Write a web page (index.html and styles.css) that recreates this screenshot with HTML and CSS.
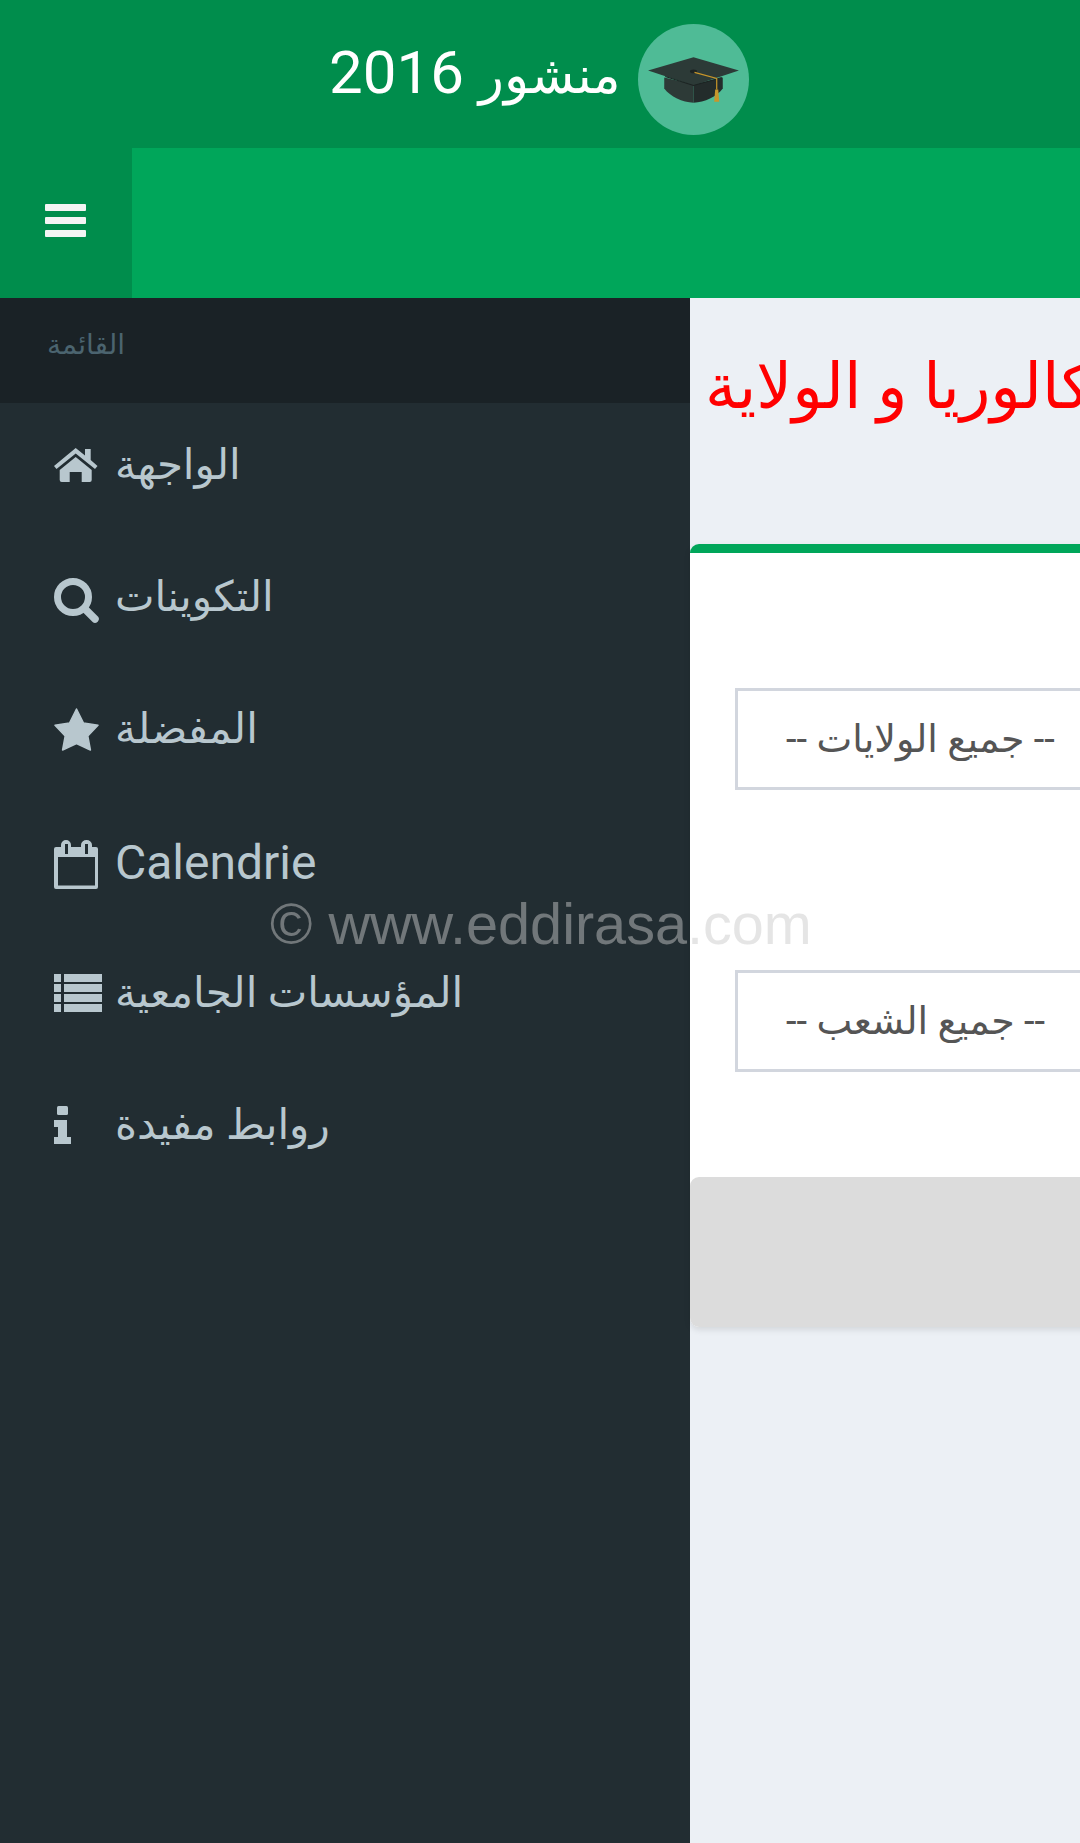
FILE: index.html
```html
<!DOCTYPE html>
<html lang="ar">
<head>
  <meta charset="UTF-8">
  <meta name="viewport" content="width=device-width, initial-scale=1.0">
  <title>منشور 2016</title>
  <link rel="stylesheet" href="styles.css">
</head>
<body>
  <header class="top-bar">
    <span class="site-title" dir="rtl"><span class="site-title-ar">منشور</span> 2016</span>
    <svg class="logo" viewBox="0 0 110 110" aria-hidden="true">
      <circle cx="55" cy="55" r="55" fill="#4fbb96"/>
      <path d="M26 53V64C32 72 44 78 55 78V60Z" fill="#2d3a37"/>
      <path d="M84 53L84 64C78 72 66 78 55 78V60Z" fill="#232c2b"/>
      <path d="M10 46L55 33L100 46L55 61Z" fill="#2c3a37"/>
      <path d="M27 52L55 61L83 53" fill="none" stroke="#1c2322" stroke-width="1"/>
      <ellipse cx="55" cy="47" rx="3.5" ry="1.8" fill="#1c2322"/>
      <path d="M56 48L78 54V65" fill="none" stroke="#c8962a" stroke-width="1.2"/>
      <path d="M76.5 65H79.5L80.5 77H75.5Z" fill="#c8962a"/>
    </svg>
  </header>

  <nav class="navbar">
    <div class="toggle">
      <span></span>
      <span></span>
      <span></span>
    </div>
  </nav>

  <div class="wrapper">
    <aside class="sidebar">
      <div class="sidebar-header"><span dir="rtl">القائمة</span></div>
      <ul class="menu">
        <li class="menu-item">
          <span class="icon-slot"><svg class="icon" width="44" height="35" viewBox="0 0 44 35"><path d="M21.7 0L31 7.5V1H36.7V12L43.5 18L41 21L21.7 5.5L2.5 21L0 18Z"/><path d="M21.7 9L37.7 22V32A2 2 0 0 1 35.7 34H27.7V24H15.7V34H7.7A2 2 0 0 1 5.7 32V22Z"/></svg></span>
          <span dir="rtl">الواجهة</span>
        </li>
        <li class="menu-item">
          <span class="icon-slot icon-low"><svg class="icon" width="45" height="45" viewBox="0 0 45 45"><circle cx="19" cy="19" r="15.5" fill="none" stroke="#b8c7ce" stroke-width="7"/><path d="M31 31L41 41" fill="none" stroke="#b8c7ce" stroke-width="7.5" stroke-linecap="round"/></svg></span>
          <span dir="rtl">التكوينات</span>
        </li>
        <li class="menu-item">
          <span class="icon-slot"><svg class="icon" width="45" height="43" viewBox="0 0 45 43"><path d="M22.5 1L29.5 15L44 17.3L33.8 28L36.4 42L22.5 35.5L8.6 42L11.2 28L1 17.3L15.5 15Z" stroke="#b8c7ce" stroke-width="1.5" stroke-linejoin="round"/></svg></span>
          <span dir="rtl">المفضلة</span>
        </li>
        <li class="menu-item">
          <span class="icon-slot icon-low"><svg class="icon" width="44" height="49" viewBox="0 0 44 49"><path fill-rule="evenodd" d="M2 7H7V5A5 5 0 0 1 17 5V7H27V5A5.500 5 0 0 1 38 5V7H42A2 2 0 0 1 44 9V47A2 2 0 0 1 42 49H2A2 2 0 0 1 0 47V9A2 2 0 0 1 2 7ZM4 17V45.500H41V17ZM11 4V14H14V4ZM31 4V14H34V4Z"/></svg></span>
          <span class="menu-latin">Calendrie</span>
        </li>
        <li class="menu-item">
          <span class="icon-slot"><svg class="icon" width="48" height="38" viewBox="0 0 48 38"><path d="M0 0H7V8H0ZM10 0H48V8H10ZM0 10H7V18H0ZM10 10H48V18H10ZM0 20H7V28H0ZM10 20H48V28H10ZM0 30H7V38H0ZM10 30H48V38H10Z"/></svg></span>
          <span dir="rtl">المؤسسات الجامعية</span>
        </li>
        <li class="menu-item">
          <span class="icon-slot"><svg class="icon" width="17" height="38" viewBox="0 0 17 38"><rect x="3" y="0" width="11" height="9" rx="1.500"/><path d="M0 14H13V31H17V38H0V31H4V21H0Z"/></svg></span>
          <span dir="rtl">روابط مفيدة</span>
        </li>
      </ul>
    </aside>

    <main class="content">
      <h1 class="page-title" dir="rtl">حسب شعبة البكالوريا و الولاية</h1>
      <section class="box">
        <div class="box-body">
          <div class="select-box" dir="rtl">-- جميع الولايات --</div>
          <div class="select-box" dir="rtl">-- جميع الشعب --</div>
        </div>
        <div class="box-footer"></div>
      </section>
    </main>
  </div>

  <div class="watermark">© www.eddirasa.com</div>
</body>
</html>
```

FILE: styles.css
```css
* {
  margin: 0;
  padding: 0;
  box-sizing: border-box;
}

body {
  font-family: Roboto, "DejaVu Sans", sans-serif;
  background-color: #ecf0f5;
  width: 1080px;
  height: 1843px;
  overflow: hidden;
  position: relative;
}

.top-bar {
  height: 148px;
  background-color: #008d4c;
  display: flex;
  align-items: center;
  padding-left: 329px;
  gap: 17px;
}

.site-title {
  color: #fff;
  font-size: 60px;
  line-height: 1;
  padding-bottom: 2px;
}

.site-title-ar {
  font-size: 52px;
}

.logo {
  width: 111px;
  height: 111px;
  margin-top: 10px;
}

.navbar {
  height: 150px;
  background-color: #00a65a;
}

.toggle {
  width: 132px;
  height: 100%;
  background-color: #008d4c;
  padding-left: 45px;
  padding-bottom: 5px;
  display: flex;
  flex-direction: column;
  justify-content: center;
  gap: 6px;
}

.toggle span {
  display: block;
  width: 41px;
  height: 7px;
  border-radius: 1px;
  background-color: #f4f4f4;
}

.wrapper {
  display: flex;
  height: 1545px;
}

.sidebar {
  width: 690px;
  flex-shrink: 0;
  background-color: #222d32;
}

.sidebar-header {
  height: 105px;
  background-color: #1a2226;
  color: #4b646f;
  font-size: 28px;
  padding-left: 47px;
  padding-bottom: 12px;
  display: flex;
  align-items: center;
}

.menu {
  list-style: none;
  margin-top: -4px;
}

.menu-item {
  height: 132px;
  display: flex;
  align-items: center;
  padding-left: 54px;
  color: #b8c7ce;
  font-size: 42px;
}

.menu-item > span:last-child {
  padding-bottom: 2px;
}

.menu-item > .menu-latin {
  font-size: 48px;
  padding-bottom: 0;
  padding-top: 4px;
}

.icon-slot {
  width: 61px;
  flex-shrink: 0;
  display: flex;
  align-items: center;
}

.icon-low {
  padding-top: 6px;
}

.icon {
  fill: #b8c7ce;
}

.content {
  width: 1080px;
  flex-shrink: 0;
}

.page-title {
  color: #f00;
  font-size: 63px;
  font-weight: 400;
  line-height: 1;
  height: 246px;
  padding-top: 57px;
  padding-left: 15px;
  text-align: left;
  white-space: nowrap;
}

.box {
  background-color: #fff;
  border-top: 9px solid #00a65a;
  border-radius: 9px;
  box-shadow: 0 3px 6px rgba(0, 0, 0, 0.1);
}

.box-body {
  padding: 135px 45px 105px;
  display: flex;
  flex-direction: column;
  gap: 180px;
}

.select-box {
  height: 102px;
  border: 3px solid #d2d6de;
  padding-left: 48px;
  color: #555;
  font-size: 38px;
  line-height: 96px;
  text-align: left;
  white-space: nowrap;
}

.box-footer {
  height: 150px;
  background-color: #dcdcdc;
  border-radius: 9px;
}

.watermark {
  position: absolute;
  left: 270px;
  top: 892px;
  font-family: "Liberation Sans", Arial, sans-serif;
  font-size: 57.6px;
  line-height: 64px;
  color: rgba(201, 201, 201, 0.48);
  white-space: nowrap;
}
```
